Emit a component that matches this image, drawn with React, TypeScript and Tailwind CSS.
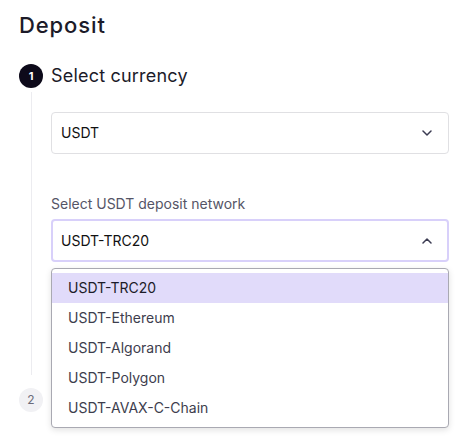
import React, { useState } from "react";

const networks = ["USDT-TRC20", "USDT-Ethereum", "USDT-Algorand", "USDT-Polygon", "USDT-AVAX-C-Chain"];

const Chevron = ({ up = false }: { up?: boolean }) => (
  <svg width="10" height="6" viewBox="0 0 10 6" fill="none" className={up ? "rotate-180" : ""}>
    <path d="M1 1l4 4 4-4" stroke="#3b3b52" strokeWidth="1.5" strokeLinecap="round" strokeLinejoin="round" />
  </svg>
);

const App = () => {
  const [network, setNetwork] = useState(networks[0]);

  return (
    <div className="min-h-screen bg-white px-[19px] pt-[11px] font-['Inter',sans-serif] text-[#1c1b29]">
      <h1 className="text-[22px] leading-[28px] font-medium tracking-[0.9px]">Deposit</h1>

      {/* Step 1 */}
      <div className="mt-[25px] flex gap-2">
        <div className="flex w-6 flex-col items-center">
          <div className="flex h-6 w-6 items-center justify-center rounded-full bg-[#0d0a1a] text-[11px] font-bold text-white">1</div>
          <div className="mt-1 w-px flex-1 bg-[#ececf0]" />
        </div>
        <div className="flex-1 pb-[113px]">
          <h2 className="text-[18px] leading-6 tracking-[0.2px]">Select currency</h2>

          <div className="mt-6 flex h-[42px] items-center justify-between rounded border border-[#e0e0e3] pr-4 pl-[9px] text-sm text-[#111]">
            <span>USDT</span>
            <Chevron />
          </div>

          <label className="mt-[40px] block text-sm leading-5 text-[#555566]">Select USDT deposit network</label>
          <div className="relative mt-[5px]">
            <div className="flex h-[43px] items-center justify-between rounded border-2 border-[#d8d0fa] pr-[15px] pl-2 text-sm text-[#111]">
              <span>{network}</span>
              <Chevron up />
            </div>
            <ul className="absolute top-[49px] right-0 left-0 z-10 rounded border border-[#a9a9b2] bg-white py-1 text-sm shadow-[0_2px_6px_rgba(0,0,0,0.12)]">
              {networks.map((n) => (
                <li
                  key={n}
                  onClick={() => setNetwork(n)}
                  className={`flex h-[30px] cursor-pointer items-center pl-4 ${n === network ? "bg-[#e1dbfa] text-[#1c1b29]" : "text-[#3d3d4d]"}`}
                >
                  {n}
                </li>
              ))}
            </ul>
          </div>
        </div>
      </div>

      {/* Step 2 */}
      <div className="mt-[13px] flex items-center gap-2">
        <div className="flex h-6 w-6 items-center justify-center rounded-full bg-[#f1f1f4] text-xs text-[#6b6b7a]">2</div>
      </div>
    </div>
  );
};

export default App;
